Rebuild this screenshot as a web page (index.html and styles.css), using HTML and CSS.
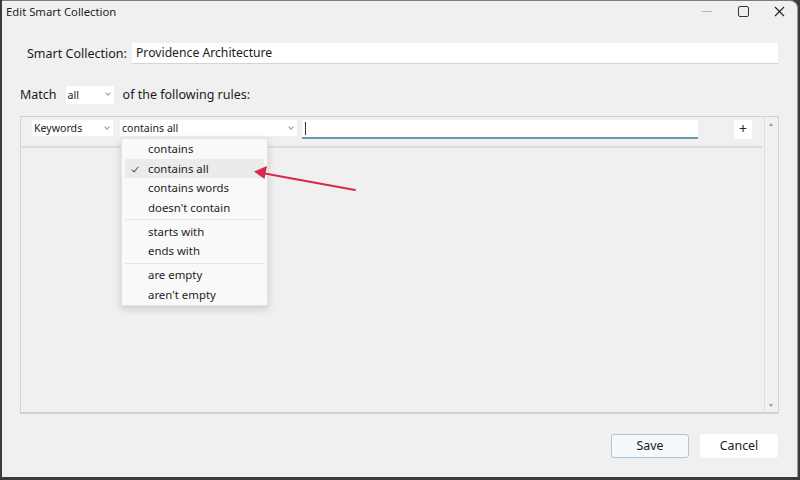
FILE: index.html
```html
<!DOCTYPE html>
<html lang="en">

<head>
    <meta charset="UTF-8">
    <meta name="viewport" content="width=device-width, initial-scale=1.0">
    <title>Edit Smart Collection</title>
    <link rel="stylesheet" href="styles.css">
</head>

<body>
    <div class="window">
        <div class="titlebar">
            <span class="title">Edit Smart Collection</span>
            <div class="controls">
                <span class="ctl min"></span>
                <span class="ctl max"></span>
                <span class="ctl close">
                    <svg width="11" height="11" viewBox="0 0 11 11">
                        <path d="M1 1 L10 10 M10 1 L1 10" stroke="#222" stroke-width="1.1" fill="none" />
                    </svg>
                </span>
            </div>
        </div>

        <div class="content">
            <div class="name_row">
                <label>Smart Collection:</label>
                <div class="input name_input">Providence Architecture</div>
            </div>

            <div class="match_row">
                <span>Match</span>
                <div class="select match_select">all<i class="chev"></i></div>
                <span>of the following rules:</span>
            </div>

            <div class="rules">
                <div class="rules_list">
                    <div class="rule">
                        <div class="select field_select">Keywords<i class="chev"></i></div>
                        <div class="select op_select">contains all<i class="chev"></i></div>
                        <div class="input value_input"><span class="caret"></span></div>
                        <div class="plus">+</div>
                    </div>
                </div>
                <div class="scrollbar">
                    <span class="arrow up"></span>
                    <span class="arrow down"></span>
                </div>

                <!-- 弹出的下拉菜单 -->
                <ul class="menu">
                    <li>contains</li>
                    <li class="checked">contains all</li>
                    <li>contains words</li>
                    <li>doesn't contain</li>
                    <li class="sep"></li>
                    <li>starts with</li>
                    <li>ends with</li>
                    <li class="sep"></li>
                    <li>are empty</li>
                    <li>aren't empty</li>
                </ul>
            </div>

            <div class="footer">
                <a href="javascript:;" class="btn save">Save</a>
                <a href="javascript:;" class="btn">Cancel</a>
            </div>
        </div>

        <svg class="pointer" width="800" height="480" viewBox="0 0 800 480">
            <path d="M355 190 L262 173" stroke="#d42a4c" stroke-width="2" fill="none" stroke-linecap="round" />
            <path d="M254 171.5 L267 166 L264.5 179 Z" fill="#d42a4c" />
        </svg>
    </div>
</body>

</html>
```

FILE: styles.css
```css
* {
    margin: 0;
    padding: 0;
    box-sizing: border-box;
}

body {
    width: 800px;
    height: 480px;
    overflow: hidden;
    background: #3b3b3b;
    font-family: "Noto Sans", "Open Sans", sans-serif;
    color: #1b1b1b;
}

body a {
    text-decoration: none;
    color: #1b1b1b;
}

.window {
    width: 796px;
    height: 477px;
    margin-left: 2px;
    background: #f0f0f0;
    border-top: 1px solid #7c7c7c;
    border-right: 1px solid #9a9a9a;
    border-top-right-radius: 8px;
    position: relative;
    display: flex;
    flex-direction: column;
}

/* 标题栏 */
.titlebar {
    height: 24px;
    display: flex;
    align-items: center;
    justify-content: space-between;
    padding-left: 4px;
    padding-bottom: 3px;
}

.title {
    font-size: 11.3px;
    color: #1f1f1f;
}

.controls {
    display: flex;
    height: 21px;
}

.ctl {
    width: 36px;
    display: flex;
    align-items: center;
    justify-content: center;
}

.min::before {
    content: "";
    width: 10px;
    height: 1px;
    background: #b5b5b5;
}

.max::before {
    content: "";
    width: 9px;
    height: 9px;
    border: 1.2px solid #333;
    border-radius: 2px;
}

.content {
    flex: 1;
    display: flex;
    flex-direction: column;
    padding: 0 18px 0 18px;
}

.input {
    background: #fff;
    border-bottom: 1px solid #d4d4d4;
}

.select {
    background: #fff;
    font-size: 10.6px;
    display: flex;
    align-items: center;
    justify-content: space-between;
    padding: 0 4px 0 2px;
}

.chev {
    width: 4px;
    height: 4px;
    border-right: 1px solid #9a9a9a;
    border-bottom: 1px solid #9a9a9a;
    transform: rotate(45deg);
    margin-top: -3px;
}

/* 名称 */
.name_row {
    margin-top: 18px;
    height: 21px;
    display: flex;
    align-items: center;
    font-size: 12.5px;
}

.name_row label {
    margin-left: 7px;
    width: 105px;
}

.name_input {
    flex: 1;
    height: 21px;
    line-height: 20px;
    padding-left: 4px;
    margin-right: 1px;
    font-size: 12.2px;
}

/* 匹配 */
.match_row {
    margin-top: 21px;
    height: 19px;
    display: flex;
    align-items: center;
    font-size: 12.5px;
}

.match_select {
    width: 48px;
    height: 18px;
    margin: 0 9px 0 9px;
}

/* 规则 */
.rules {
    margin-top: 12px;
    height: 298px;
    border: 1px solid #d2d2d2;
    border-bottom: 2px solid #d2d2d2;
    position: relative;
    display: flex;
}

.rules_list {
    flex: 1;
    padding-left: 1px;
}

.rule {
    height: 31px;
    border-bottom: 2px solid #dcdcdc;
    display: flex;
    align-items: flex-start;
    padding-top: 3px;
    margin-right: 2px;
}

.field_select {
    width: 81px;
    height: 16px;
    margin-left: 10px;
}

.op_select {
    width: 177px;
    height: 16px;
    margin-left: 7px;
}

.value_input {
    width: 396px;
    height: 19px;
    margin-left: 5px;
    border-bottom: 2px solid #6b95ab;
    padding: 2px 0 0 3px;
}

.caret {
    display: block;
    width: 1px;
    height: 13px;
    background: #333;
}

.plus {
    width: 18px;
    height: 19px;
    margin-left: 36px;
    background: #fff;
    font-size: 14px;
    line-height: 18px;
    text-align: center;
    color: #222;
}

.scrollbar {
    width: 14px;
    border-left: 1px solid #dedede;
    position: relative;
}

.arrow {
    position: absolute;
    left: 4px;
    width: 0;
    height: 0;
    border-left: 2.5px solid transparent;
    border-right: 2.5px solid transparent;
}

.up {
    top: 6px;
    border-bottom: 3px solid #9d9d9d;
}

.down {
    bottom: 5px;
    border-top: 3px solid #9d9d9d;
}

/* 下拉菜单 */
.menu {
    position: absolute;
    left: 100px;
    top: 21px;
    width: 147px;
    list-style: none;
    background: #f9f9f9;
    border: 1px solid #e2e2e2;
    box-shadow: 0 3px 8px rgba(0, 0, 0, 0.16);
    padding: 0 3px 1px 3px;
    font-size: 11.4px;
}

.menu li {
    height: 19.5px;
    line-height: 19.5px;
    padding-left: 23px;
    color: #1d1d1d;
    position: relative;
}

.menu li.checked {
    background: #ebebeb;
}

.menu li.checked::before {
    content: "";
    position: absolute;
    left: 8px;
    top: 6px;
    width: 3px;
    height: 6px;
    border-right: 1px solid #555;
    border-bottom: 1px solid #555;
    transform: rotate(40deg);
}

.menu li.sep {
    height: 3px;
    margin-bottom: 1.5px;
    border-bottom: 1px solid #e4e4e4;
}

/* 底部按钮 */
.footer {
    margin-top: 20px;
    display: flex;
    justify-content: flex-end;
    gap: 11px;
    padding-right: 1px;
}

.btn {
    width: 78px;
    height: 24px;
    line-height: 22px;
    text-align: center;
    font-size: 12.4px;
    background: #fff;
    border: 1px solid #fff;
    border-radius: 3px;
}

.btn.save {
    background: #f6f9fb;
    border-color: #a9c6d8;
}

.pointer {
    position: absolute;
    left: -2px;
    top: -1px;
    pointer-events: none;
}
```
